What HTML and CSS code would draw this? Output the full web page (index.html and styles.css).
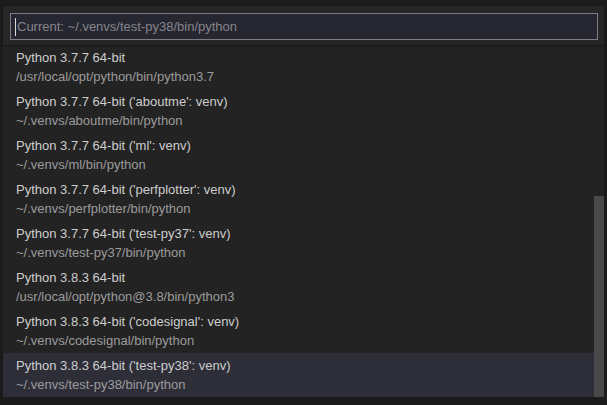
FILE: index.html
```html
<!DOCTYPE html>
<html>
<head>
<meta charset="utf-8">
<link rel="stylesheet" href="styles.css">
</head>
<body>
<div class="palette">
  <div class="header">
    <div class="input"><span class="caret"></span><span class="placeholder">Current: ~/.venvs/test-py38/bin/python</span></div>
  </div>
  <div class="list">
    <div class="item"><div class="title">Python 3.7.7 64-bit</div><div class="sub">/usr/local/opt/python/bin/python3.7</div></div>
    <div class="item"><div class="title">Python 3.7.7 64-bit ('aboutme': venv)</div><div class="sub">~/.venvs/aboutme/bin/python</div></div>
    <div class="item"><div class="title">Python 3.7.7 64-bit ('ml': venv)</div><div class="sub">~/.venvs/ml/bin/python</div></div>
    <div class="item"><div class="title">Python 3.7.7 64-bit ('perfplotter': venv)</div><div class="sub">~/.venvs/perfplotter/bin/python</div></div>
    <div class="item"><div class="title">Python 3.7.7 64-bit ('test-py37': venv)</div><div class="sub">~/.venvs/test-py37/bin/python</div></div>
    <div class="item"><div class="title">Python 3.8.3 64-bit</div><div class="sub">/usr/local/opt/python@3.8/bin/python3</div></div>
    <div class="item"><div class="title">Python 3.8.3 64-bit ('codesignal': venv)</div><div class="sub">~/.venvs/codesignal/bin/python</div></div>
    <div class="item selected"><div class="title">Python 3.8.3 64-bit ('test-py38': venv)</div><div class="sub">~/.venvs/test-py38/bin/python</div></div>
    <div class="scrollbar"></div>
  </div>
</div>
</body>
</html>
```
FILE: styles.css
```css
html, body {
  margin: 0;
  padding: 0;
}
body {
  background: #1b1b1c;
  width: 607px;
  height: 405px;
  overflow: hidden;
  padding: 6px 3px 8px 3px;
  box-sizing: border-box;
  font-family: "Liberation Sans", Arial, sans-serif;
  font-size: 13px;
}
.palette {
  width: 601px;
  height: 391px;
  background: #232323;
  display: flex;
  flex-direction: column;
}
.header {
  background: #262626;
  height: 39px;
  box-sizing: border-box;
  padding: 7px 6px 5px 7px;
  box-shadow: 0 1px 2px rgba(0,0,0,0.35);
  position: relative;
  z-index: 1;
}
.input {
  height: 27px;
  box-sizing: border-box;
  border: 1px solid #7c7c82;
  background: #262630;
  display: flex;
  align-items: center;
  padding-left: 4px;
}
.caret {
  width: 1px;
  height: 18px;
  background: #d8d8d8;
  margin-right: 1px;
}
.placeholder {
  color: #85858b;
  font-size: 13px;
}
.list {
  position: relative;
  flex: 1;
}
.item {
  height: 44px;
  box-sizing: border-box;
  padding: 3px 0 0 13px;
}
.item.selected {
  background: #2e2e39;
}
.title {
  line-height: 19px;
  color: #cdcdcd;
}
.sub {
  line-height: 19px;
  color: #9b9b9b;
}
.scrollbar {
  position: absolute;
  right: 0;
  top: 151px;
  width: 10px;
  height: 201px;
  background: #494949;
}
```
